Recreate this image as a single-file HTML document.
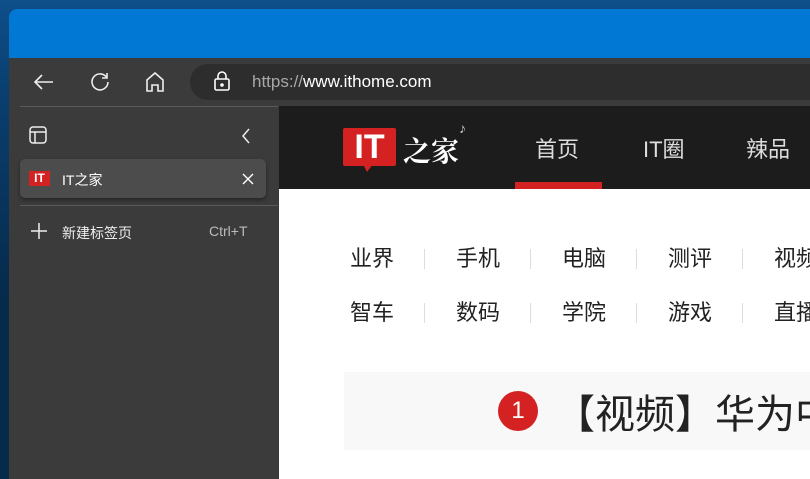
<!DOCTYPE html>
<html><head><meta charset="utf-8"><style>
*{margin:0;padding:0;box-sizing:border-box}
html,body{width:810px;height:479px;overflow:hidden}
body{position:relative;background:linear-gradient(180deg,#0e4f8a 0,#0a3f70 90px,#062a4a 300px);font-family:"Liberation Sans","Noto Sans CJK SC",sans-serif}
.win{position:absolute;left:9px;top:9px;width:801px;height:470px;border-radius:8px 0 0 0;overflow:hidden;background:#3b3b3b}
.title{position:absolute;left:0;top:0;right:0;height:49px;background:#0078d4}
.tb{position:absolute;left:0;top:49px;right:0;height:48px;background:#3b3b3b}
.addr{position:absolute;left:181px;top:6px;width:620px;height:36px;border-radius:18px 0 0 18px;background:#2d2d2d}
.url{position:absolute;left:243px;top:14px;font-size:17px;color:#fff}
.url span{color:#a8a8a8}
.side{position:absolute;left:0;top:97px;width:269px;height:373px;background:#3b3b3b}
.line{position:absolute;height:1px;background:#5a5a5a}
.tab{position:absolute;left:11px;top:53px;width:246px;height:39px;border-radius:5px;background:#4c4c4c;box-shadow:0 2px 4px rgba(0,0,0,.4)}
.content{position:absolute;left:270px;top:97px;width:531px;height:373px;background:#fff;overflow:hidden}
.hdr{position:absolute;left:0;top:0;width:100%;height:83px;background:#1c1c1c}
.nav{position:absolute;color:#ddd;font-size:22px;top:26px;white-space:nowrap}
.cat{position:absolute;font-size:22px;color:#222;white-space:nowrap}
.sep{position:absolute;width:1px;height:20px;background:#ddd}
</style></head><body>
<div class="win">
<div class="title"></div>
<div class="tb">
 <svg style="position:absolute;left:22px;top:12px" width="26" height="24" viewBox="0 0 26 24" fill="none" stroke="#eee" stroke-width="1.6"><path d="M22 12H4M11 5L4 12l7 7"/></svg>
 <svg style="position:absolute;left:79px;top:12px" width="24" height="24" viewBox="0 0 24 24" fill="none" stroke="#eee" stroke-width="1.6"><path d="M19 8A8 8 0 1 0 20 12"/><path d="M19 3v5h-5"/></svg>
 <svg style="position:absolute;left:135px;top:12px" width="22" height="24" viewBox="0 0 22 24" fill="none" stroke="#eee" stroke-width="1.6"><path d="M3 10L11 3l8 7v11h-5v-6H8v6H3z"/></svg>
 <div class="addr"></div>
 <svg style="position:absolute;left:204px;top:12px" width="18" height="22" viewBox="0 0 18 22" fill="none" stroke="#fff" stroke-width="1.6"><rect x="2" y="9" width="14" height="11" rx="1.5"/><path d="M5 9V6a4 4 0 0 1 8 0v3"/><circle cx="9" cy="15" r="1" fill="#fff"/></svg>
 <div class="url"><span>https://</span>www.ithome.com</div>
</div>
<div class="side">
 <div class="line" style="left:11px;top:0;width:258px"></div>
 <svg style="position:absolute;left:20px;top:20px" width="18" height="18" viewBox="0 0 18 18" fill="none" stroke="#eee" stroke-width="1.5"><rect x="1" y="1" width="16" height="16" rx="3"/><path d="M1 6h16M6 6v11"/></svg>
 <svg style="position:absolute;left:231px;top:21px" width="12" height="18" viewBox="0 0 12 18" fill="none" stroke="#eee" stroke-width="1.5"><path d="M9 2L3 9l6 7"/></svg>
 <div class="tab">
  <div style="position:absolute;left:9px;top:12px;width:21px;height:15px;background:#d42222;color:#fff;font-weight:bold;font-size:12px;line-height:15px;text-align:center">IT</div>
  <div style="position:absolute;left:42px;top:11px;color:#fff;font-size:14px">IT之家</div>
  <svg style="position:absolute;left:222px;top:14px" width="12" height="12" viewBox="0 0 12 12" stroke="#fff" stroke-width="1.4"><path d="M1 1l10 10M11 1L1 11"/></svg>
 </div>
 <div class="line" style="left:11px;top:99px;width:258px"></div>
 <svg style="position:absolute;left:21px;top:116px" width="18" height="18" viewBox="0 0 18 18" stroke="#eee" stroke-width="1.5"><path d="M9 1v16M1 9h16"/></svg>
 <div style="position:absolute;left:53px;top:117px;color:#eee;font-size:14px">新建标签页</div>
 <div style="position:absolute;left:200px;top:117px;color:#bbb;font-size:14px">Ctrl+T</div>
</div>
<div class="content">
 <div class="hdr">
  <div style="position:absolute;left:64px;top:22px;width:53px;height:38px;background:#d42222;border-radius:2px;color:#fff;font-weight:bold;font-size:34px;line-height:38px;text-align:center;font-family:'Liberation Sans',sans-serif">IT</div>
  <div style="position:absolute;left:84px;top:58px;width:0;height:0;border-left:4px solid transparent;border-right:6px solid transparent;border-top:8px solid #d42222"></div>
  <div style="position:absolute;left:124px;top:24px;color:#fff;font-size:28px;font-family:'Noto Serif CJK SC',serif;font-weight:bold;white-space:nowrap">之家</div>
  <div style="position:absolute;left:180px;top:14px;color:#ccc;font-size:14px">♪</div>
  <div class="nav" style="left:256px">首页</div>
  <div class="nav" style="left:364px">IT圈</div>
  <div class="nav" style="left:467px">辣品</div>
  <div style="position:absolute;left:236px;top:76px;width:87px;height:7px;background:#d42222"></div>
 </div>
 <div class="cat" style="left:71px;top:135px">业界</div>
 <div class="cat" style="left:177px;top:135px">手机</div>
 <div class="cat" style="left:283px;top:135px">电脑</div>
 <div class="cat" style="left:389px;top:135px">测评</div>
 <div class="cat" style="left:495px;top:135px">视频</div>
 <div class="cat" style="left:71px;top:189px">智车</div>
 <div class="cat" style="left:177px;top:189px">数码</div>
 <div class="cat" style="left:283px;top:189px">学院</div>
 <div class="cat" style="left:389px;top:189px">游戏</div>
 <div class="cat" style="left:495px;top:189px">直播</div>
 <div class="sep" style="left:145px;top:143px"></div><div class="sep" style="left:251px;top:143px"></div><div class="sep" style="left:357px;top:143px"></div><div class="sep" style="left:463px;top:143px"></div>
 <div class="sep" style="left:145px;top:197px"></div><div class="sep" style="left:251px;top:197px"></div><div class="sep" style="left:357px;top:197px"></div><div class="sep" style="left:463px;top:197px"></div>
 <div style="position:absolute;left:65px;top:266px;width:500px;height:78px;background:#f8f8f8"></div>
 <div style="position:absolute;left:219px;top:285px;width:40px;height:40px;border-radius:50%;background:#d42222;color:#fff;font-size:24px;line-height:40px;text-align:center">1</div>
 <div style="position:absolute;left:276px;top:276px;font-size:40px;color:#222;white-space:nowrap">【视频】华为中</div>
</div>
</div>
</body></html>
